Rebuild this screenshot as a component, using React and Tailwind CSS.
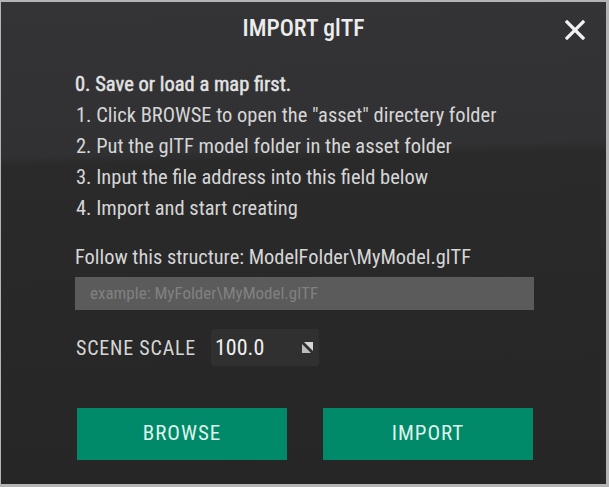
import React from "react";

function SpinIcon() {
  return (
    <svg width="11" height="11" viewBox="0 0 11 11">
      <polygon points="2,0 11,0 11,9" fill="#d6d6d6" />
      <polygon points="0,2 0,11 9,11" fill="#bdbdbd" />
    </svg>
  );
}

export default function App() {
  return (
    <div className="h-[487px] w-[609px] bg-[#b4b4b4] pt-[2px] pl-[1px] pr-[3px] pb-[3px] font-['Roboto_Condensed',Roboto,sans-serif]">
      <div className="relative flex h-full w-full flex-col bg-[linear-gradient(178.4deg,#343436_0%,#313133_31%,#2a2a2b_33%,#262626_100%)] pl-[74px] text-[#d6d6d6]">
        <div className="-ml-[74px] flex h-[54px] items-center justify-center text-[23.5px] font-medium text-[#ececec]">
          IMPORT glTF
        </div>
        <button className="absolute right-[20px] top-[17px] flex h-[22px] w-[22px] items-center justify-center">
          <svg width="20" height="20" viewBox="0 0 20 20">
            <path d="M2 2 L18 18 M18 2 L2 18" stroke="#f2f2f2" strokeWidth="3.2" strokeLinecap="square" />
          </svg>
        </button>

        <div className="mt-[13px] flex flex-col text-[20.5px] leading-[31px]">
          <div className="font-normal text-[#e4e4e4] [-webkit-text-stroke:0.45px_#e4e4e4]">0. Save or load a map first.</div>
          <div className="pl-[1px]">1. Click BROWSE to open the "asset" directery folder</div>
          <div className="pl-[1px]">2. Put the glTF model folder in the asset folder</div>
          <div className="pl-[1px]">3. Input the file address into this field below</div>
          <div className="pl-[1px]">4. Import and start creating</div>
        </div>

        <div className="mt-[18px] text-[20.4px] leading-[31px]">Follow this structure: ModelFolder\MyModel.glTF</div>

        <div className="mt-[4px] flex h-[33px] w-[459px] items-center bg-[#5b5b5b] pl-[15px] text-[17px] text-[#818181]">
          example: MyFolder\MyModel.glTF
        </div>

        <div className="mt-[19px] flex h-[37px] items-center">
          <div className="w-[136px] pl-[1px] text-[20px] tracking-[0.8px]">SCENE SCALE</div>
          <div className="flex h-[37px] w-[108px] items-center justify-between rounded-[3px] bg-[#303030] pl-[4px] pr-[6px]">
            <span className="text-[22px] text-[#f0f0f0]">100.0</span>
            <SpinIcon />
          </div>
        </div>

        <div className="mt-[42px] flex gap-[36px] pl-[2px]">
          <button className="flex h-[52px] w-[210px] items-center justify-center bg-[#018a69] text-[21px] tracking-[1px] text-[#dff3ec]">
            BROWSE
          </button>
          <button className="flex h-[52px] w-[210px] items-center justify-center bg-[#018a69] text-[21px] tracking-[1px] text-[#dff3ec]">
            IMPORT
          </button>
        </div>
      </div>
    </div>
  );
}
